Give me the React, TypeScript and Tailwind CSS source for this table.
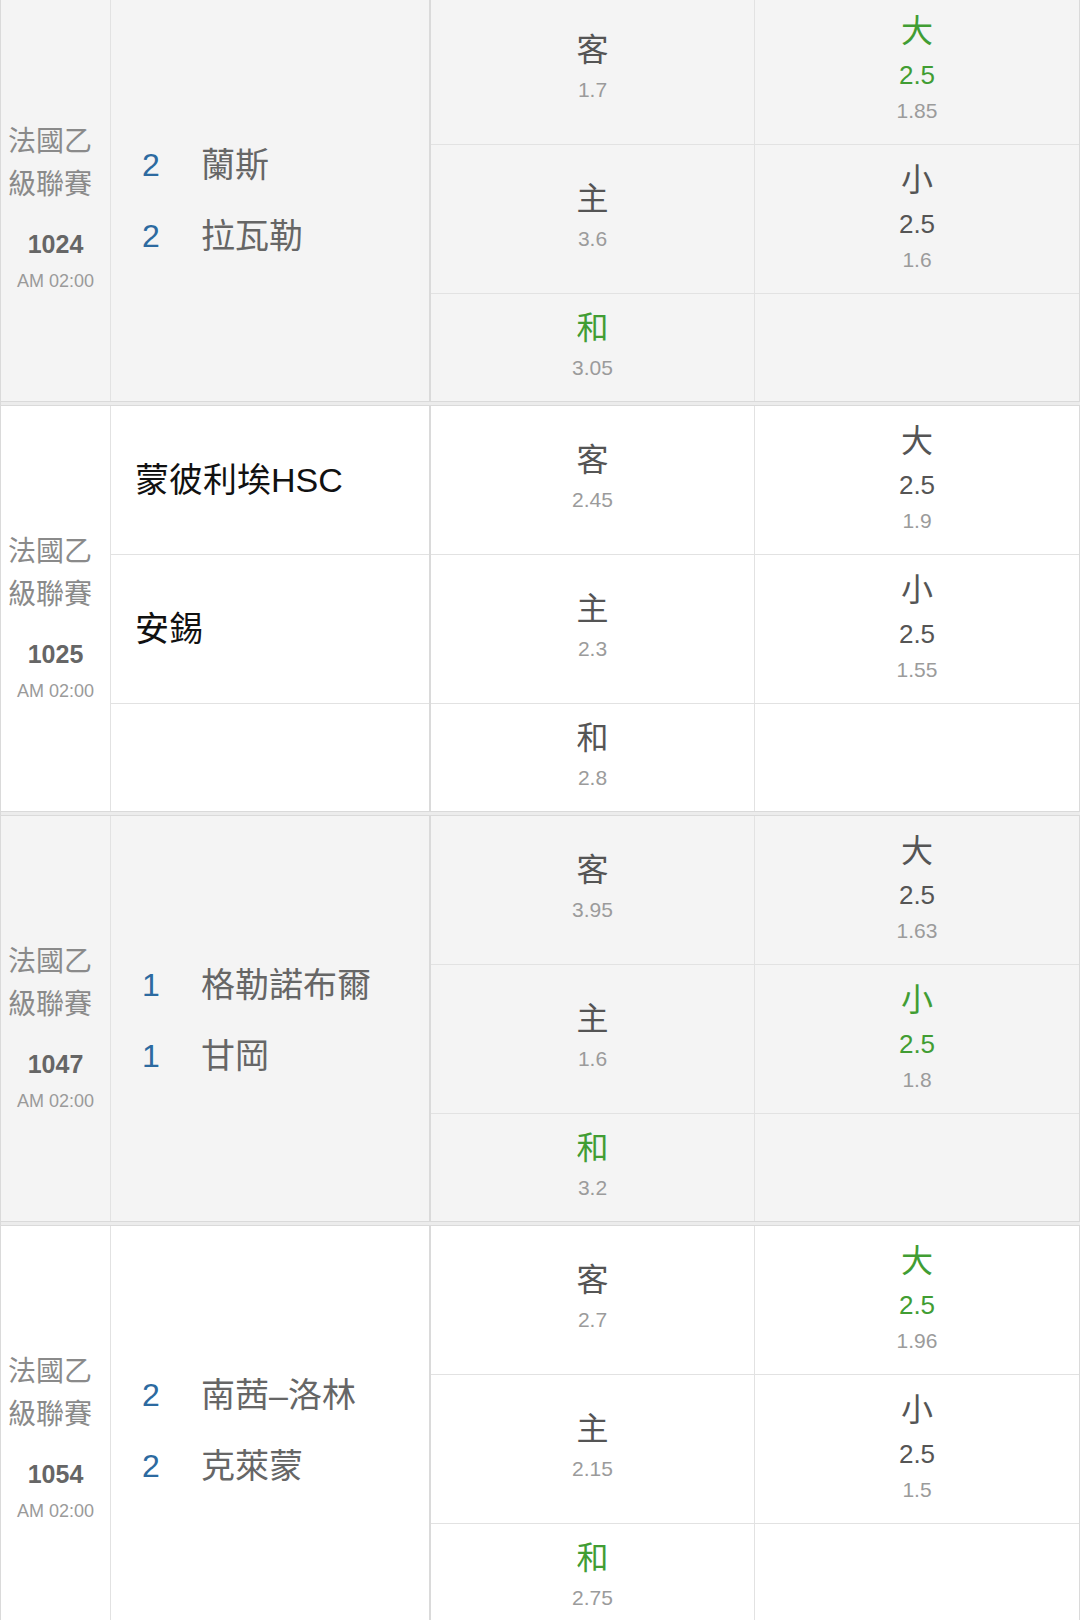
import React from 'react';

const GREEN = 'text-[#419d33]';

interface Match {
  id: string;
  league: [string, string];
  time: string;
  gray: boolean;
  teams: [string, string];
  scores?: [string, string];
  away: string;
  home: string;
  draw: string;
  drawWin?: boolean;
  over: string;
  under: string;
  line: string;
  win?: 'over' | 'under';
}

const matches: Match[] = [
  {
    id: '1024',
    league: ['法國乙', '級聯賽'],
    time: 'AM 02:00',
    gray: true,
    teams: ['蘭斯', '拉瓦勒'],
    scores: ['2', '2'],
    away: '1.7',
    home: '3.6',
    draw: '3.05',
    drawWin: true,
    over: '1.85',
    under: '1.6',
    line: '2.5',
    win: 'over',
  },
  {
    id: '1025',
    league: ['法國乙', '級聯賽'],
    time: 'AM 02:00',
    gray: false,
    teams: ['蒙彼利埃HSC', '安錫'],
    away: '2.45',
    home: '2.3',
    draw: '2.8',
    over: '1.9',
    under: '1.55',
    line: '2.5',
  },
  {
    id: '1047',
    league: ['法國乙', '級聯賽'],
    time: 'AM 02:00',
    gray: true,
    teams: ['格勒諾布爾', '甘岡'],
    scores: ['1', '1'],
    away: '3.95',
    home: '1.6',
    draw: '3.2',
    drawWin: true,
    over: '1.63',
    under: '1.8',
    line: '2.5',
    win: 'under',
  },
  {
    id: '1054',
    league: ['法國乙', '級聯賽'],
    time: 'AM 02:00',
    gray: false,
    teams: ['南茜–洛林', '克萊蒙'],
    scores: ['2', '2'],
    away: '2.7',
    home: '2.15',
    draw: '2.75',
    drawWin: true,
    over: '1.96',
    under: '1.5',
    line: '2.5',
    win: 'over',
  },
];

const OddCell = ({ label, value, win }: { label: string; value: string; win?: boolean }) => (
  <div className="flex flex-col items-center justify-center">
    <span className={`text-[32px] leading-[38px] ${win ? GREEN : 'text-[#555]'}`}>{label}</span>
    <span className="mt-[2px] text-[21px] leading-[38px] text-[#9b9b9b]">{value}</span>
  </div>
);

const LineCell = ({
  label,
  line,
  value,
  win,
}: {
  label: string;
  line: string;
  value: string;
  win?: boolean;
}) => (
  <div className="flex flex-col items-center justify-center">
    <span className={`text-[32px] leading-[38px] ${win ? GREEN : 'text-[#555]'}`}>{label}</span>
    <span className={`mt-[8px] text-[26px] leading-[34px] ${win ? GREEN : 'text-[#555]'}`}>{line}</span>
    <span className="mt-[2px] text-[21px] leading-[34px] text-[#9b9b9b]">{value}</span>
  </div>
);

const MatchBlock = ({ m }: { m: Match }) => {
  const bg = m.gray ? 'bg-[#f4f4f4]' : 'bg-white';
  const nameColor = m.scores ? 'text-[#666]' : 'text-[#111]';

  return (
    <div className={`flex ${bg}`}>
      {/* league / number / time */}
      <div className="flex w-[110px] shrink-0 flex-col justify-center border-r border-[#e2e2e2] pt-[18px]">
        <div className="pl-[7px] text-[28px] leading-[43px] text-[#8a8a8a]">
          <div>{m.league[0]}</div>
          <div>{m.league[1]}</div>
        </div>
        <div className="mt-[21px] text-center text-[25px] font-bold leading-[34px] text-[#666]">{m.id}</div>
        <div className="mt-[5px] text-center text-[18px] leading-[30px] text-[#9a9a9a]">{m.time}</div>
      </div>

      {/* teams */}
      {m.scores ? (
        <div className="flex w-[320px] shrink-0 flex-col justify-center border-r-2 border-[#dadada] pt-[4px]">
          {m.teams.map((t, i) => (
            <div key={t} className="flex items-center text-[34px] leading-[71px]">
              <span className="w-[90px] shrink-0 pl-[31px] text-[32px] text-[#2c6aa0]">{m.scores![i]}</span>
              <span className={nameColor}>{t}</span>
            </div>
          ))}
        </div>
      ) : (
        <div className="flex w-[320px] shrink-0 flex-col border-r-2 border-[#dadada]">
          <div className="flex h-[149px] items-center border-b border-[#e2e2e2] pl-[24px] text-[34px] text-[#111]">
            {m.teams[0]}
          </div>
          <div className="flex h-[149px] items-center border-b border-[#e2e2e2] pl-[24px] text-[34px] text-[#111]">
            {m.teams[1]}
          </div>
          <div className="h-[107px]" />
        </div>
      )}

      {/* odds */}
      <div className="flex flex-1 flex-col border-r border-[#dadada]">
        <div className="grid h-[149px] grid-cols-2 border-b border-[#e2e2e2]">
          <div className="flex justify-center border-r border-[#e2e2e2]">
            <OddCell label="客" value={m.away} />
          </div>
          <div className="flex justify-center">
            <LineCell label="大" line={m.line} value={m.over} win={m.win === 'over'} />
          </div>
        </div>
        <div className="grid h-[149px] grid-cols-2 border-b border-[#e2e2e2]">
          <div className="flex justify-center border-r border-[#e2e2e2]">
            <OddCell label="主" value={m.home} />
          </div>
          <div className="flex justify-center">
            <LineCell label="小" line={m.line} value={m.under} win={m.win === 'under'} />
          </div>
        </div>
        <div className="grid h-[107px] grid-cols-2">
          <div className="flex justify-center border-r border-[#e2e2e2]">
            <OddCell label="和" value={m.draw} win={m.drawWin} />
          </div>
          <div />
        </div>
      </div>
    </div>
  );
};

const App = () => {
  return (
    <div
      className="h-[1620px] w-[1080px] overflow-hidden bg-white"
      style={{ fontFamily: '"Liberation Sans", "Noto Sans CJK TC", sans-serif' }}
    >
      <div className="-mt-[4px] border-l border-[#dadada]">
        {matches.map((m, i) => (
          <div key={m.id}>
            {i > 0 && <div className="h-[5px] border-y border-[#dadada] bg-[#ececec]" />}
            <MatchBlock m={m} />
          </div>
        ))}
      </div>
    </div>
  );
};

export default App;
